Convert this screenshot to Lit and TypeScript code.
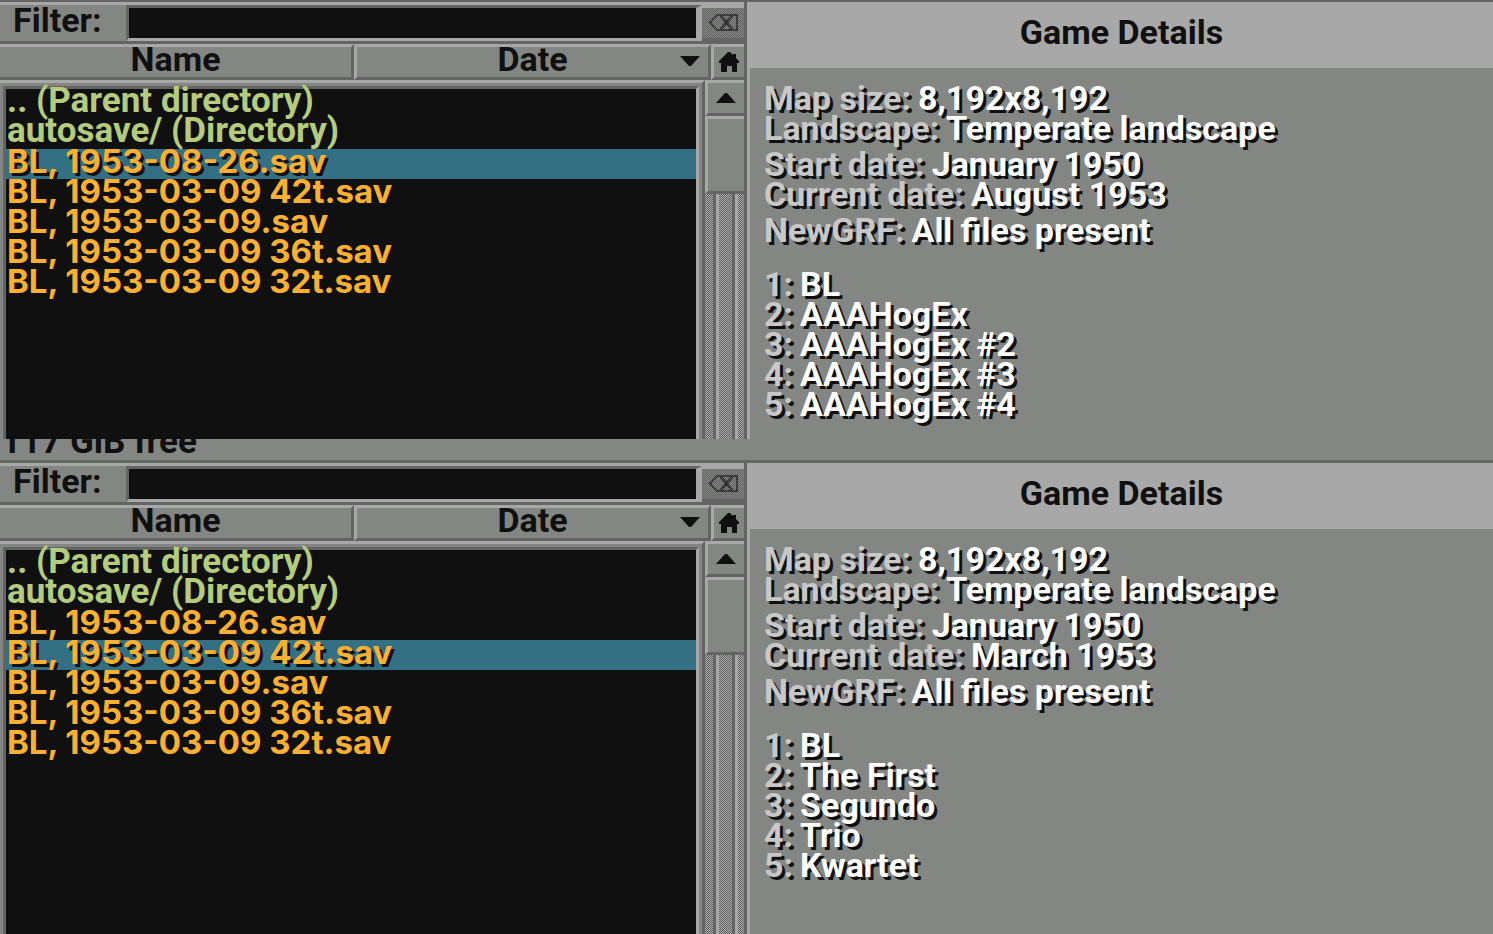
import { LitElement, html, css, svg } from "lit";
import { customElement, property, state } from "lit/decorators.js";

interface SaveGame {
  start: string;
  current: string;
  companies: string[];
}

const FILES = [
  "BL, 1953-08-26.sav",
  "BL, 1953-03-09 42t.sav",
  "BL, 1953-03-09.sav",
  "BL, 1953-03-09 36t.sav",
  "BL, 1953-03-09 32t.sav",
];

const FOLDERS = [".. (Parent directory)", "autosave/ (Directory)"];

const arrowDown = svg`<svg width="20" height="10" viewBox="0 0 20 10" aria-hidden="true"><path d="M0 0H20L11 10H9Z"/></svg>`;
const arrowUp = svg`<svg width="20" height="10" viewBox="0 0 20 10" aria-hidden="true"><path d="M0 10H20L11 0H9Z"/></svg>`;
const home = svg`<svg width="20" height="20" viewBox="0 0 20 20" aria-hidden="true"><path d="M9 0H11L14 3V2H17V6L20 9V11H18V20H13V14H8V20H2V11H0V9Z"/></svg>`;
const erase = svg`<svg width="29" height="17" viewBox="0 0 29 17" fill="none" stroke="#303130" stroke-width="2" stroke-dasharray="2 0.500" aria-hidden="true"><path d="M1 8.500 8 1H28V16H8Z"/><path d="M12 2 23 15M23 2 12 15" stroke-width="3"/></svg>`;

@customElement("load-window")
export class LoadWindow extends LitElement {
  @property({ attribute: false }) game!: SaveGame;
  @property({ type: Number }) selected = 0;

  static styles = css`
    :host {
      --light: #a8a8a8;
      --dark: #646464;
      --face: #848684;
      --ink: #101010;
      display: flex;
      background: var(--face);
      color: var(--ink);
      font: bold 34px/24px Roboto, "Liberation Sans", sans-serif;
      white-space: nowrap;
    }
    button, input {
      font: inherit;
      color: inherit;
      margin: 0;
      padding: 0;
      border-radius: 0;
      outline: none;
    }
    svg { display: block; fill: var(--ink); }
    .erase svg { fill: none; }
    .browser {
      box-sizing: border-box;
      flex: 0 0 round(up, 50vw, 1px);
      display: flex;
      flex-direction: column;
      border-right: 3px solid var(--dark);
    }
    .filter {
      display: flex;
      height: 42px;
      box-sizing: border-box;
      border-top: 3px solid var(--light);
      border-bottom: 3px solid var(--dark);
    }
    .filter label { box-sizing: border-box; width: 126px; padding: 3px 0 0 13px; }
    .filter input {
      flex: 1;
      min-width: 0;
      background: var(--ink);
      color: #fcfcfc;
      border: 3px solid var(--light);
      border-top-color: var(--dark);
      border-left-color: var(--dark);
      border-right-width: 6px;
    }
    .erase {
      width: 42px;
      border: 0;
      border-top: 3px solid var(--light);
      border-bottom: 3px solid var(--dark);
      padding-bottom: 2px;
      display: flex;
      align-items: center;
      justify-content: center;
      background: repeating-conic-gradient(#848684 0 25%, #646464 0 50%) 0 0 / 2px 2px;
    }
    .bevel {
      box-sizing: border-box;
      background: var(--face);
      border: 3px solid var(--light);
      border-right-color: var(--dark);
      border-bottom-color: var(--dark);
    }
    .sorters { display: flex; height: 36px; }
    .sort {
      display: grid;
      grid-template-columns: 1fr auto 1fr;
      padding-bottom: 6px;
      align-items: center;
    }
    .sort span { grid-column: 2; }
    .sort svg { justify-self: end; margin: 4px 8px 0 0; }
    .name { flex: 1 1 0; border-left: 0; }
    .date { flex: 1 1 3px; }
    .home {
      width: 33px;
      border-right: 0;
      display: flex;
      justify-content: center;
      align-items: center;
    }
    .content { flex: 1; display: flex; min-height: 0; }
    .pane {
      flex: 1;
      display: flex;
      border-top: 3px solid var(--light);
      border-right: 3px solid var(--dark);
      padding: 3px 3px 0;
    }
    .list {
      flex: 1;
      min-height: 350px;
      margin: 0;
      padding: 0;
      list-style: none;
      background: var(--ink);
      border: 3px solid var(--dark);
      border-right-color: var(--light);
      border-bottom: 0;
    }
    .row {
      display: block;
      width: 100%;
      height: 30px;
      padding: 0 0 6px 1px;
      border: 0;
      background: none;
      text-align: left;
      color: #fcb030;
      font: bold 33px/24px Inter, Roboto, sans-serif;
    }
    .folder { color: #b4cc7c; font: bold 35px/24px Roboto, sans-serif; }
    .chosen { background: #347084; text-shadow: 3px 3px 0 var(--ink); }
    .scroll { width: 39px; display: flex; flex-direction: column; }
    .up {
      height: 36px;
      border-right: 0;
      display: flex;
      justify-content: center;
      align-items: center;
    }
    .thumb { height: 78px; border-right: 0; }
    .track {
      flex: 1;
      background: linear-gradient(90deg, #0000 8px, var(--dark) 8px 11px, var(--light) 11px 14px, #0000 14px 27px, var(--dark) 27px 30px, var(--light) 30px 33px, #0000 33px),
        repeating-conic-gradient(#a8a8a8 0 25%, #646464 0 50%) 0 0 / 2px 2px;
    }
    .details {
      flex: 1;
      min-width: 0;
      border-left: 3px solid var(--light);
    }
    h2 {
      box-sizing: border-box;
      height: 66px;
      margin: 0;
      padding-top: 18px;
      font: inherit;
      text-align: center;
      background: var(--light);
    }
    dl {
      margin: 0;
      padding: 18px 14px 0;
      color: #fcfcfc;
      text-shadow: 3px 3px 0 var(--ink);
    }
    .pair { display: flex; gap: 7px; height: 30px; }
    .gap { margin-top: 6px; }
    .players { margin-top: 24px; }
    dt { color: #c8c8c8; }
    dd { margin: 0; }
  `;

  private pair(label: string, value: string, extra = "") {
    return html`<div class="pair ${extra}"><dt>${label}:</dt><dd>${value}</dd></div>`;
  }

  render() {
    return html`
      <section class="browser">
        <div class="filter">
          <label for="filter">Filter:</label>
          <input id="filter" type="text" autocomplete="off" />
          <button class="erase" aria-label="Clear filter">${erase}</button>
        </div>
        <div class="sorters">
          <button class="bevel sort name"><span>Name</span></button>
          <button class="bevel sort date"><span>Date</span>${arrowDown}</button>
          <button class="bevel home" aria-label="Home">${home}</button>
        </div>
        <div class="content">
          <div class="pane">
            <ul class="list">
              ${FOLDERS.map((f) => html`<li><button class="row folder">${f}</button></li>`)}
              ${FILES.map((f, i) => html`<li>
                <button class="row ${i === this.selected ? "chosen" : ""}" @click=${() => (this.selected = i)}>${f}</button>
              </li>`)}
            </ul>
          </div>
          <div class="scroll">
            <button class="bevel up" aria-label="Scroll up">${arrowUp}</button>
            <div class="bevel thumb"></div>
            <div class="track"></div>
          </div>
        </div>
      </section>
      <section class="details">
        <h2>Game Details</h2>
        <dl>
          ${this.pair("Map size", "8,192x8,192")}
          ${this.pair("Landscape", "Temperate landscape")}
          ${this.pair("Start date", this.game.start, "gap")}
          ${this.pair("Current date", this.game.current)}
          ${this.pair("NewGRF", "All files present", "gap")}
          <div class="players">
            ${this.game.companies.map((c, i) => this.pair(String(i + 1), c))}
          </div>
        </dl>
      </section>
    `;
  }
}

@customElement("app-root")
export class AppRoot extends LitElement {
  @state() private games: SaveGame[] = [
    { start: "January 1950", current: "August 1953", companies: ["BL", "AAAHogEx", "AAAHogEx #2", "AAAHogEx #3", "AAAHogEx #4"] },
    { start: "January 1950", current: "March 1953", companies: ["BL", "The First", "Segundo", "Trio", "Kwartet"] },
  ];

  static styles = css`
    :host {
      display: flex;
      flex-direction: column;
      height: 100vh;
      overflow: hidden;
      background: #848684;
    }
    .first { flex: none; border-top: 2px solid #646464; }
    .second { flex: 1; border-top: 3px solid #646464; }
    .free {
      flex: none;
      display: flex;
      align-items: flex-end;
      height: 21px;
      box-sizing: border-box;
      padding: 0 1px 6px;
      overflow: hidden;
      color: #101010;
      font: bold 35px/24px Roboto, "Liberation Sans", sans-serif;
    }
  `;

  render() {
    return html`
      <load-window class="first" .game=${this.games[0]} .selected=${0}></load-window>
      <div class="free">117 GiB free</div>
      <load-window class="second" .game=${this.games[1]} .selected=${1}></load-window>
    `;
  }
}
